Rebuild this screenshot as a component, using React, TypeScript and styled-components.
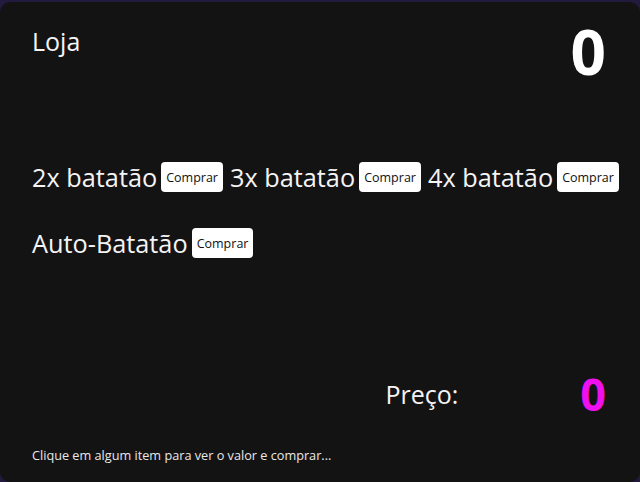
import React, { useState } from 'react';
import styled, { createGlobalStyle } from 'styled-components';

const GlobalStyle = createGlobalStyle`
	html, body {
		margin: 0;
		padding: 0;
		height: 100%;
		background-color: #231b3d;
	}

	#root {
		height: 100%;
	}
`

const StyledCard = styled.main`
	box-sizing: border-box;
	height: calc(100vh - 2px);
	margin-top: 2px;
	display: flex;
	flex-direction: column;

	padding: 18px 32px 18px 32px;
	border-radius: 10px;

	background-color: #141314;
	color: #f4f4f4;
	font-family: "Open Sans", "Noto Sans", sans-serif;
`

const StyledHeader = styled.header`
	display: flex;
	justify-content: space-between;
	align-items: flex-start;
	padding-right: 2px;
`

const StyledTitle = styled.h1`
	margin: 6px 0 0 0;
	font-size: 25px;
	font-weight: 400;
	line-height: 30px;
`

const StyledScore = styled.span`
	font-size: 62px;
	font-weight: 700;
	line-height: 62px;
	color: #ffffff;
`

const StyledItems = styled.section`
	display: flex;
	flex-wrap: wrap;
	column-gap: 7px;
	row-gap: 36px;

	margin-top: 80px;
	margin-right: -26px;
`

const StyledItem = styled.div`
	display: flex;
	align-items: center;
	gap: 4px;

	font-size: 25.3px;
	line-height: 30px;
`

const StyledBuy = styled.button`
	height: 30px;
	padding: 0 5px;

	border: none;
	border-radius: 4px;
	background-color: #ffffff;
	color: #111111;

	font-family: "Open Sans", "Noto Sans", sans-serif;
	font-size: 12.5px;
	cursor: pointer;

	:hover {
		background-color: #e8e8e8;
	}
`

const StyledPrice = styled.div`
	display: flex;
	justify-content: flex-end;
	align-items: center;

	margin-top: auto;
	padding-right: 2px;
`

const StyledPriceLabel = styled.span`
	font-size: 25px;
	line-height: 30px;
`

const StyledPriceValue = styled.span<{ $gap: number }>`
	margin-left: ${(p) => p.$gap}px;
	font-size: 45px;
	font-weight: 700;
	line-height: 50px;
	color: #ee10ee;
`

const StyledHint = styled.p`
	margin: 27px 0 0 0;
	font-size: 12.7px;
	color: #e8e8e8;
`

interface ShopItem {
	name: string;
	price: number;
}

const items: ShopItem[] = [
	{ name: '2x batatão', price: 0 },
	{ name: '3x batatão', price: 0 },
	{ name: '4x batatão', price: 0 },
	{ name: 'Auto-Batatão', price: 0 },
];

export default function App() {
	const [score] = useState(0);
	const [price, setPrice] = useState(0);

	return (
		<>
			<GlobalStyle/>
			<StyledCard>
				<StyledHeader>
					<StyledTitle>Loja</StyledTitle>
					<StyledScore>{score}</StyledScore>
				</StyledHeader>
				<StyledItems>
					{items.map((item) => (
						<StyledItem key={item.name}>
							{item.name}
							<StyledBuy onClick={() => setPrice(() => item.price)}>Comprar</StyledBuy>
						</StyledItem>
					))}
				</StyledItems>
				<StyledPrice>
					<StyledPriceLabel>Preço:</StyledPriceLabel>
					<StyledPriceValue $gap={122}>{price}</StyledPriceValue>
				</StyledPrice>
				<StyledHint>Clique em algum item para ver o valor e comprar...</StyledHint>
			</StyledCard>
		</>
	)
}
